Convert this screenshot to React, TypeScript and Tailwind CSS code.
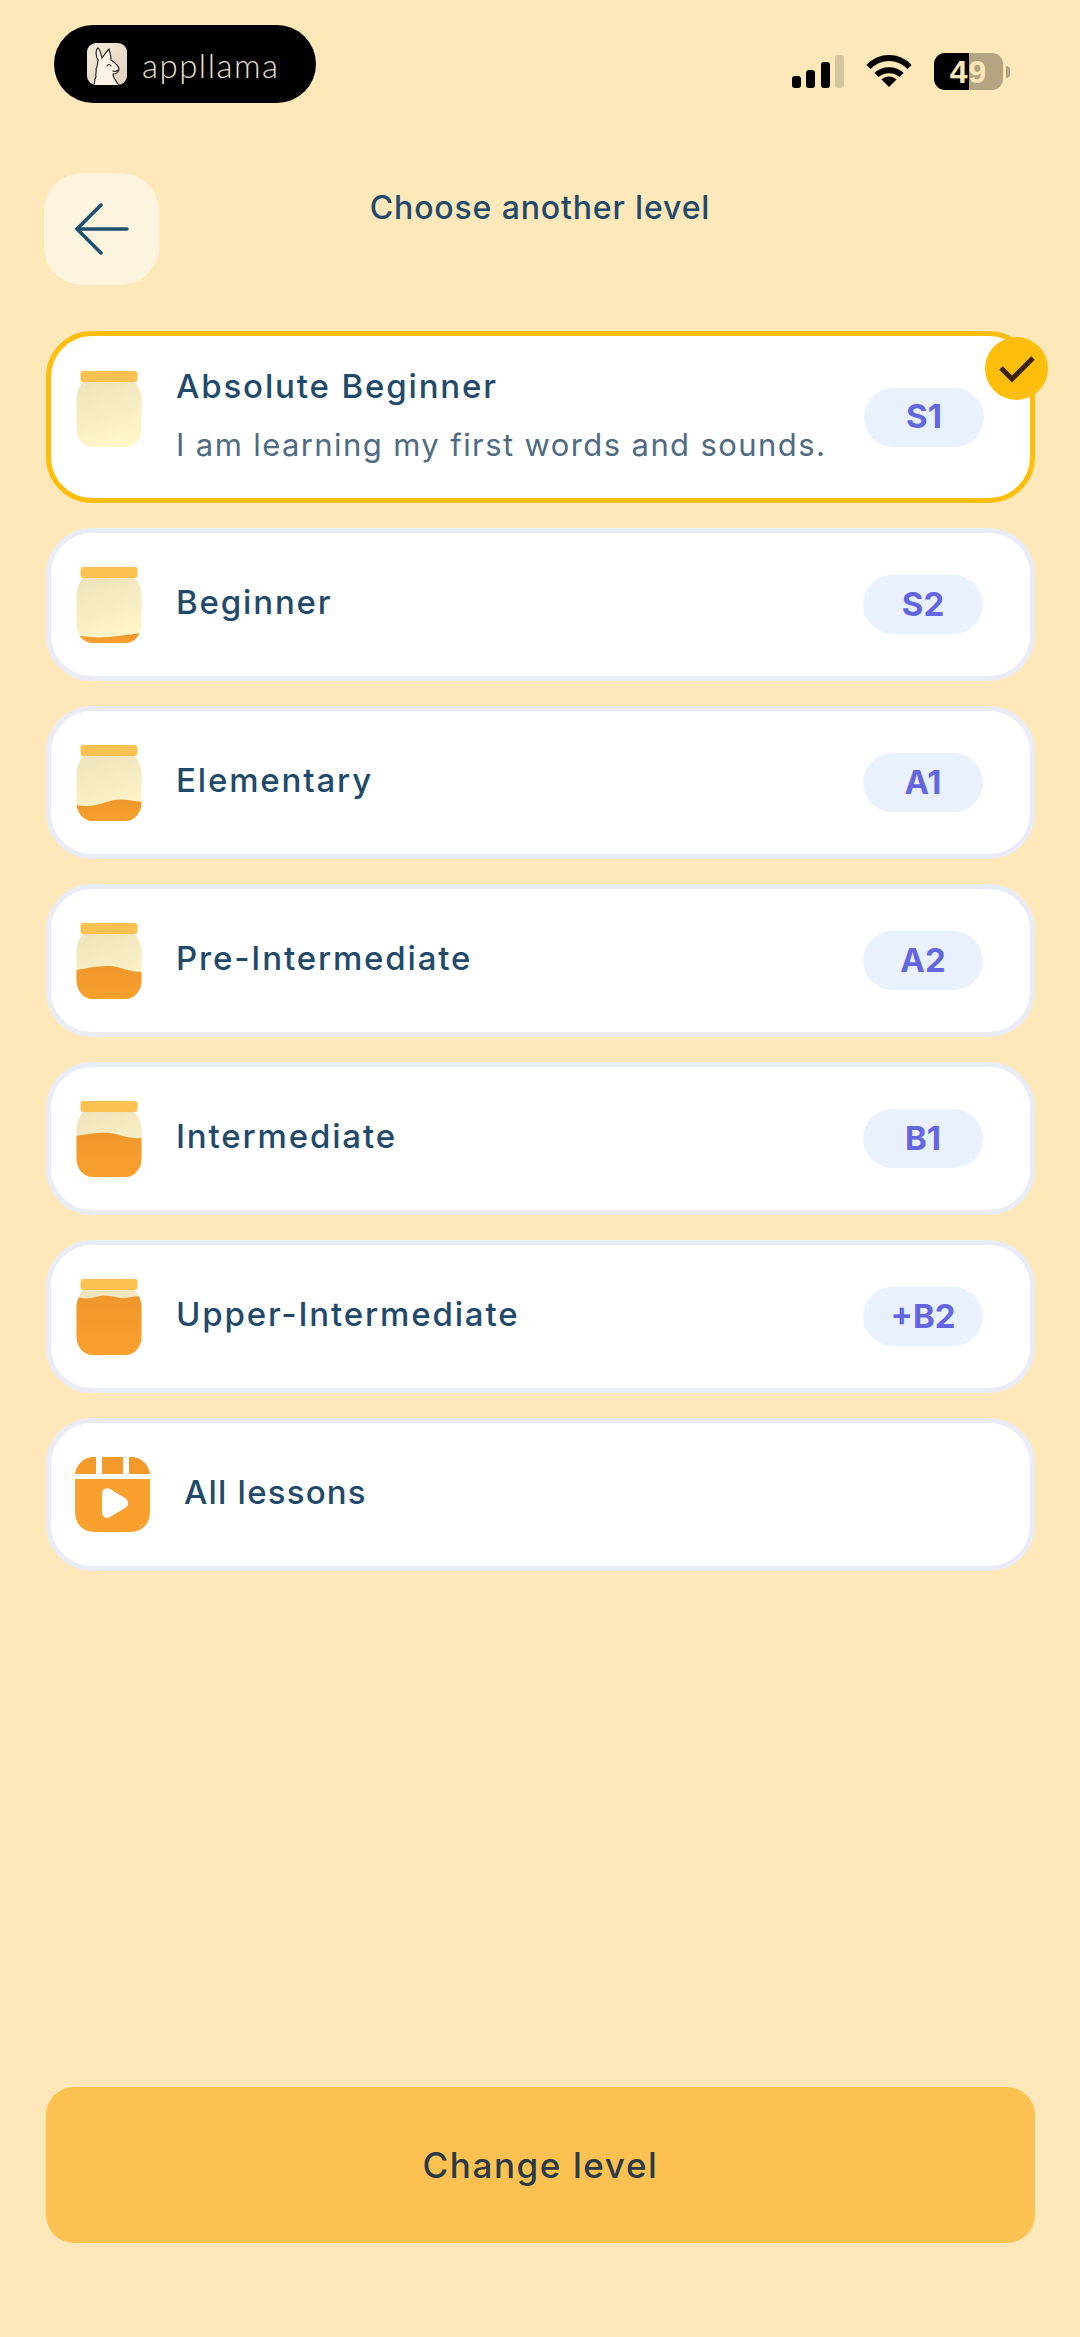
import { useId } from 'react'

const levels = [
  {
    name: 'Absolute Beginner',
    note: 'I am learning my first words and sounds.',
    code: 'S1',
    honey: '',
  },
  {
    name: 'Beginner',
    code: 'S2',
    honey: 'M0 68 C14 71 28 71 42 69 C50 68 58 67 66 66 V76 H0 Z',
  },
  {
    name: 'Elementary',
    code: 'A1',
    honey: 'M0 60 C14 63 24 59 36 55.5 C46 53 56 56 66 57 V76 H0 Z',
  },
  {
    name: 'Pre-Intermediate',
    code: 'A2',
    honey: 'M0 47 C12 45 22 42.5 34 43 C46 44 52 49 66 49 V76 H0 Z',
  },
  {
    name: 'Intermediate',
    code: 'B1',
    honey: 'M0 35 C12 33 22 31 34 32 C46 34 52 38 66 37 V76 H0 Z',
  },
  {
    name: 'Upper-Intermediate',
    code: '+B2',
    honey: 'M0 18 C8 20 14 20 24 17 C34 15 42 20 50 19 C56 18 60 17 66 17 V76 H0 Z',
  },
]

function Jar({ honey, raised }: { honey: string; raised: boolean }) {
  const id = useId()
  return (
    <svg width="66" height="76" viewBox="0 0 66 76" className={`shrink-0 ${raised ? 'mb-[16px]' : ''}`}>
      <defs>
        <clipPath id={`${id}-body`}>
          <path d="M7 11 H59 C62 15 65 20 65.5 27 V58 C65.5 68 58 76 50 76 H16 C8 76 0.5 68 0.5 58 V27 C1 20 4 15 7 11 Z" />
        </clipPath>
        <linearGradient id={`${id}-glass`} x1="0" y1="0" x2="0.3" y2="1">
          <stop offset="0" stopColor="#ebdfb8" />
          <stop offset="1" stopColor="#fff5c8" />
        </linearGradient>
        <linearGradient id={`${id}-honey`} x1="0" y1="0" x2="0" y2="1">
          <stop offset="0" stopColor="#ef972b" />
          <stop offset="1" stopColor="#f9a02e" />
        </linearGradient>
      </defs>
      <g clipPath={`url(#${id}-body)`}>
        <rect width="66" height="76" fill={`url(#${id}-glass)`} />
        {honey && <path d={honey} fill={`url(#${id}-honey)`} />}
      </g>
      <rect x="4.5" y="0" width="57" height="11" rx="3" fill="#fdc152" />
    </svg>
  )
}

function LessonsIcon() {
  return (
    <svg width="75" height="75" viewBox="0 0 75 75" className="shrink-0">
      <path d="M0 17 C1 8 8 1 17 0 H21 V17 Z" fill="#f39a2b" />
      <rect x="27" y="0" width="21" height="17" fill="#f39a2b" />
      <path d="M54 0 H58 C67 1 74 8 75 17 H54 Z" fill="#f39a2b" />
      <path d="M0 22 H75 V55 C75 67 67 75 55 75 H20 C8 75 0 67 0 55 Z" fill="#f9a02e" />
      <path d="M27 37 C27 32 31 30 35 32 L50 41 C54 43 54 49 50 51 L35 60 C31 62 27 60 27 55 Z" fill="#fff" />
    </svg>
  )
}

function LlamaMark() {
  return (
    <div className="w-[40px] h-[42px] rounded-[9px] bg-[linear-gradient(135deg,#f5ebdc,#e2d1bc)] shrink-0 overflow-hidden">
      <svg width="40" height="42" viewBox="0 0 40 42" fill="none" stroke="#2e2620" strokeWidth="1.2" strokeLinecap="round">
        <path
          d="M11 17 C8 12 9 6 11 5 C13 6 14 11 15 15 C17 12 20 8 22 6 C23 9 24 13 24 17 C27 19 32 22 32 26 C32 29 29 31 26 31 C26 35 29 38 32 42 H7 Z"
          fill="#fbf3e6"
          stroke="none"
        />
        <path d="M11 17 C8 12 9 6 11 5 C13 6 14 11 15 15 C17 12 20 8 22 6 C23 9 24 13 24 17 C27 19 32 22 32 26 C32 29 29 31 26 31 C26 35 29 38 32 42" />
        <path d="M11 17 C10 22 11 23 9 26 C10 29 8 31 9 34 C7 37 8 39 7 42" />
        <path d="M20 23 C21 21 23 21 24 23" />
        <path d="M26 28 C28 29 30 28 31 27" />
      </svg>
    </div>
  )
}

function Signal() {
  return (
    <div className="flex items-end gap-[5.5px]">
      <div className="w-[9px] h-[12px] rounded-[3px] bg-black" />
      <div className="w-[9px] h-[18px] rounded-[3px] bg-black" />
      <div className="w-[9px] h-[26px] rounded-[3px] bg-black" />
      <div className="w-[9px] h-[33px] rounded-[3px] bg-[#d6c6a0]" />
    </div>
  )
}

function Wifi() {
  return (
    <svg width="46" height="35" viewBox="0 0 46 35" fill="none" stroke="#000" strokeWidth="6">
      <path d="M2.5 13 C14 1 32 1 43.5 13" />
      <path d="M10.5 21 C17 14.5 29 14.5 35.500 21" />
      <path d="M15.500 25.500 L23 33 L30.500 25.500 C26 21.500 20 21.500 15.500 25.500 Z" fill="#000" stroke="none" />
    </svg>
  )
}

export default function App() {
  return (
    <div className="min-h-[2337px] bg-[#fee7b9] flex flex-col font-['Inter',sans-serif]">
      <div className="flex items-center justify-between pt-[25px] pl-[54px] pr-[70px]">
        <div className="w-[262px] h-[78px] rounded-full bg-black flex items-center gap-[15px] pl-[33px]">
          <LlamaMark />
          <span className="pt-[2px] font-['Lato',sans-serif] font-light text-[33px] leading-none tracking-[1.5px] text-[#e9e0d0]">
            appllama
          </span>
        </div>
        <div className="flex items-center gap-[22px] pt-[15px]">
          <Signal />
          <Wifi />
          <div className="flex items-center gap-[3px]">
            <div className="w-[69px] h-[37px] rounded-[11px] bg-[linear-gradient(90deg,#000_50%,#b5a482_50%)] flex items-center justify-center font-['Liberation_Sans',sans-serif] font-bold text-[32px] tracking-[1px] leading-none text-[#fde7b8]">
              49
            </div>
            <div className="w-[4px] h-[12px] rounded-r-full bg-[#b5a482]" />
          </div>
        </div>
      </div>

      <div className="grid grid-cols-[1fr_auto_1fr] items-start px-[44px] mt-[70px]">
        <button
          type="button"
          className="w-[115px] h-[112px] rounded-[38px] bg-[#fdf4e0] flex items-center justify-center"
          aria-label="Back"
        >
          <svg width="54" height="52" viewBox="0 0 54 52" fill="none" stroke="#1f4f70" strokeWidth="3.500" strokeLinecap="round" strokeLinejoin="round">
            <path d="M2 26 H52" />
            <path d="M26 2 L2 26 L26 50" />
          </svg>
        </button>
        <h1 className="mt-[14px] text-[32px] leading-[42px] font-[550] tracking-[0.85px] text-[#1f4a6b]">
          Choose another level
        </h1>
      </div>

      <div className="flex flex-col gap-[25px] pl-[46px] pr-[45px] mt-[46px]">
        {levels.map((level, i) => (
          <div
            key={level.code}
            className={`relative flex items-center bg-white rounded-[46px] border-[5px] pl-[25px] ${
              i === 0 ? 'h-[172px] border-[#ffbe0b] pr-[46px]' : 'h-[153px] border-[#e9ecf5] pr-[47px]'
            }`}
          >
            <Jar honey={level.honey} raised={i === 0} />
            <div className={`ml-[34px] flex-1 ${i === 0 ? 'pb-[3px]' : 'pb-[6px]'}`}>
              <p className="text-[33px] leading-[40px] font-[550] tracking-[1.85px] text-[#1f4a6b]">{level.name}</p>
              {level.note && (
                <p className="mt-[19px] text-[31px] leading-[40px] tracking-[1.4px] text-[#4f6b83]">{level.note}</p>
              )}
            </div>
            <span className="w-[120px] h-[59px] rounded-full bg-[#e9f1ff] flex items-center justify-center text-[33px] font-bold text-[#6366e0]">
              {level.code}
            </span>
            {i === 0 && (
              <div className="absolute top-[1px] right-[-18px] w-[63px] h-[63px] rounded-full bg-[#ffbe0b] flex items-center justify-center">
                <svg width="36" height="28" viewBox="0 0 36 28" fill="none" stroke="#3a2408" strokeWidth="5">
                  <path d="M2 13 L13 24 L34 3" />
                </svg>
              </div>
            )}
          </div>
        ))}
        <div className="flex items-center bg-white rounded-[46px] border-[5px] border-[#e9ecf5] h-[153px] pl-[24px]">
          <LessonsIcon />
          <p className="ml-[34px] pb-[6px] text-[33px] leading-[40px] font-[550] tracking-[1.2px] text-[#1f4a6b]">
            All lessons
          </p>
        </div>
      </div>

      <div className="pl-[46px] pr-[45px] mt-[516px]">
        <button
          type="button"
          className="w-full h-[156px] rounded-[28px] bg-[#fdc152] text-[35px] font-[550] tracking-[1.6px] text-[#2b3b45]"
        >
          Change level
        </button>
      </div>
    </div>
  )
}
